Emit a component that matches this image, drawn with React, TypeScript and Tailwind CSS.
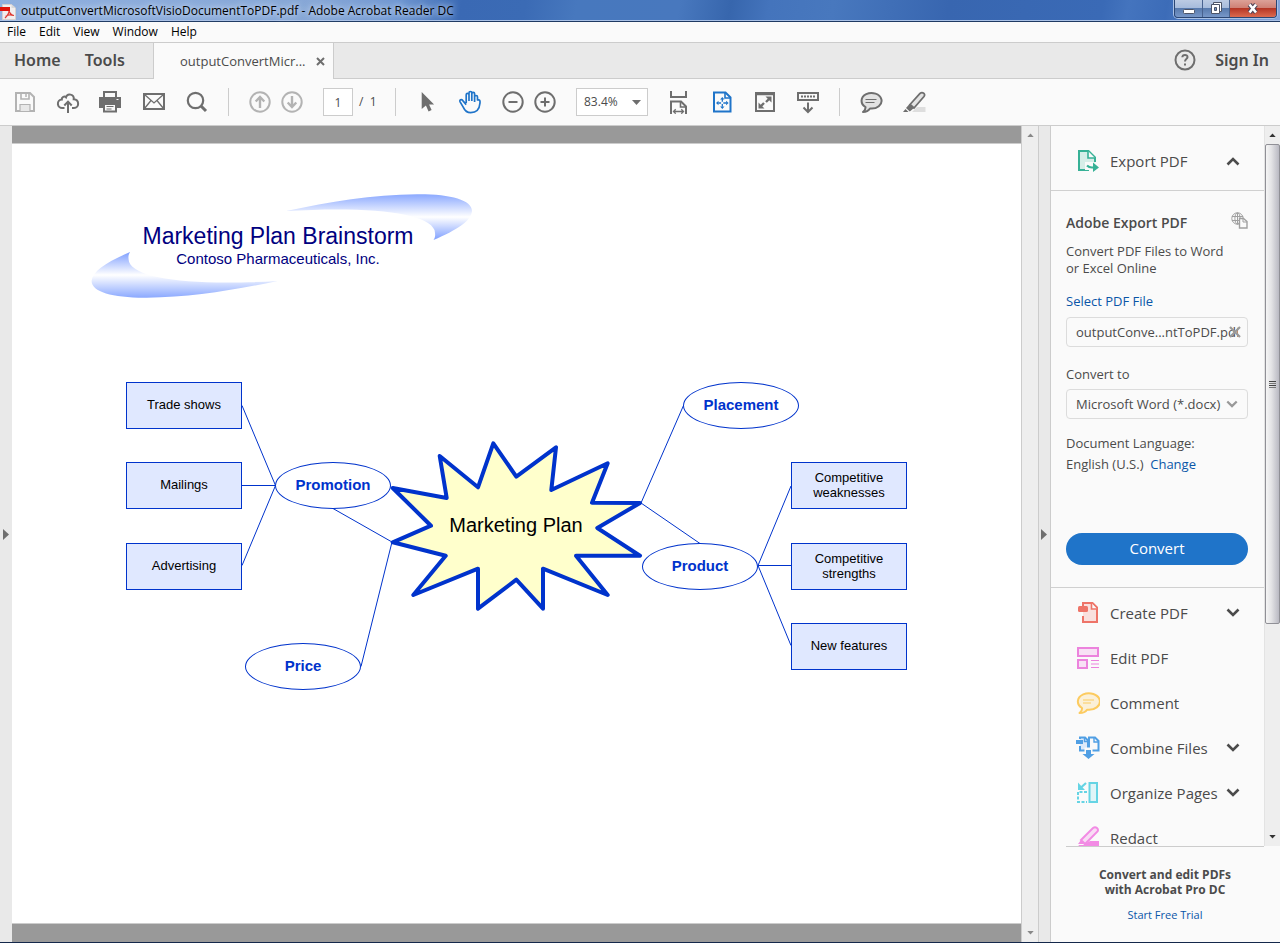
import React from "react";

type IconProps = { children: React.ReactNode; size?: number };

function Icon({ children, size = 24 }: IconProps) {
  return (
    <svg width={size} height={size} viewBox="0 0 24 24" fill="none" stroke="currentColor" strokeWidth="2" className="shrink-0" aria-hidden="true">
      {children}
    </svg>
  );
}

function ToolButton({ label, tone = "text-[#6e6e6e]", children }: { label: string; tone?: string; children: React.ReactNode }) {
  return (
    <button type="button" aria-label={label} className={`shrink-0 ${tone}`}>
      <Icon>{children}</Icon>
    </button>
  );
}

function Separator() {
  return <div className="h-7 w-px shrink-0 bg-[#cccccc]" />;
}

function Chevron({ up = false, small = false }: { up?: boolean; small?: boolean }) {
  return (
    <svg width={small ? 12 : 14} height={small ? 8 : 9} viewBox="0 0 14 9" fill="none" stroke="currentColor" strokeWidth="2.6" aria-hidden="true">
      <path d={up ? "M1.5 7.5L7 2L12.5 7.5" : "M1.5 1.5L7 7L12.5 1.5"} />
    </svg>
  );
}

function TitleBar() {
  return (
    <header className="relative flex h-[22px] shrink-0 items-center border-b border-[#1f3a63] bg-[linear-gradient(100deg,#8fb0df_0%,#86a6d6_25%,#6f97d2_31%,#3a69b4_36%,#3b6bb5_41%,#4778be_45%,#4878be_53%,#3766ad_57%,#4474bc_60%,#4878be_65%,#3866b0_74%,#3a6ab6_86%,#4474be_88%,#3c6cb8_91%,#6f95cf_97%,#84a5da_100%)] shadow-[inset_0_-1px_0_#a9c1e6]">
      <svg width="17" height="18" viewBox="0 0 17 18" aria-hidden="true" className="shrink-0">
        <path d="M2.500 2.500h9l4 3.500v11.500h-13z" fill="#f1eeee" stroke="#d5d0d0" />
        <path d="M11.500 2.500v3.500h4z" fill="#d9d9d9" />
        <path d="M0 5h10v4H0z" fill="#e0130c" />
        <path d="M9 9c0 3-2 5-4 7M9 9c1 3 2 4 5 4.500M5.500 14.500c2-1.500 5-2 8-1" stroke="#df3a32" strokeWidth="1.200" fill="none" />
      </svg>
      <h1 className="ml-1 text-[12px] text-black [text-shadow:0_0_8px_#dbe7f8,0_0_5px_#c4d6f0]">
        outputConvertMicrosoftVisioDocumentToPDF.pdf - Adobe Acrobat Reader DC
      </h1>
      <div className="mr-[3px] ml-auto flex h-[18px] self-start overflow-hidden rounded-b-[4px] border border-t-0 border-[#2b4673] shadow-[0_0_0_1px_#a9c1e6]">
        <button type="button" aria-label="Minimize" className="flex w-[28px] items-center justify-center border-r border-[#48628f] bg-[linear-gradient(#bccbe3_0%,#a7bcdc_45%,#5678ab_46%,#7797c8_100%)]">
          <svg width="12" height="14" viewBox="0 0 12 14"><rect x="0.500" y="7.500" width="11" height="4" rx="1" fill="#fff" stroke="#4c5468" /></svg>
        </button>
        <button type="button" aria-label="Restore" className="flex w-[27px] items-center justify-center border-r border-[#48628f] bg-[linear-gradient(#bccbe3_0%,#a7bcdc_45%,#5678ab_46%,#7797c8_100%)]">
          <svg width="13" height="14" viewBox="0 0 13 14" fill="#fff" stroke="#4c5468"><path d="M3.500 .5h8v9h-8z" /><path d="M1.500 2.500h8v9h-8z" /><path d="M4.500 5.500h2v3h-2z" fill="#7797c8" /></svg>
        </button>
        <button type="button" aria-label="Close" className="flex w-[46px] items-center justify-center bg-[linear-gradient(#dca198_0%,#cf8175_45%,#b23222_46%,#dc6a4f_100%)]">
          <svg width="14" height="14" viewBox="0 0 14 14" fill="none"><path d="M3.500 2.500l6.500 8M10 2.500l-6.500 8" stroke="#4c4458" strokeWidth="4.600" /><path d="M3.500 2.500l6.500 8M10 2.500l-6.500 8" stroke="#fff" strokeWidth="2.600" /></svg>
        </button>
      </div>
    </header>
  );
}

function TabBar() {
  return (
    <div className="flex h-[37px] shrink-0 border-t border-[#cccccc] bg-[#e9e9e9] text-[#4b4b4b]">
      <nav className="flex w-[154px] shrink-0 items-center gap-6 border-r border-b border-[#cccccc] pb-px pl-[14px] font-['Noto_Sans',sans-serif] text-[16px] font-semibold">
        <button type="button">Home</button>
        <button type="button">Tools</button>
      </nav>
      <div className="flex w-[180px] shrink-0 items-center justify-between border-r border-[#cccccc] bg-[#fafafa] pt-px pr-2 pl-[26px]">
        <button type="button" className="text-[13px]">outputConvertMicr...</button>
        <button type="button" aria-label="Close tab">
          <svg width="9" height="9" viewBox="0 0 9 9" stroke="#6e6e6e" strokeWidth="2"><path d="M1 1l7 7M8 1l-7 7" /></svg>
        </button>
      </div>
      <div className="flex flex-1 items-center justify-end gap-[18px] border-b border-[#cccccc] pr-[11px] pb-px">
        <button type="button" aria-label="Help" className="text-[#6e6e6e]">
          <Icon>
            <circle cx="12" cy="12" r="9.500" />
            <path d="M9.300 9.300c.2-3.300 5.400-3.100 5.200-.2c-.1 1.700-2.400 2-2.500 4.400" />
            <path d="M11 15.500h2v2h-2z" fill="currentColor" stroke="none" />
          </Icon>
        </button>
        <button type="button" className="font-['Noto_Sans',sans-serif] text-[16px] font-semibold">Sign In</button>
      </div>
    </div>
  );
}

function Toolbar() {
  return (
    <div className="flex h-[47px] shrink-0 items-center gap-[19px] border-b border-[#cccccc] px-[13px]">
      <ToolButton label="Save" tone="text-[#b3b3b3]">
        <path d="M3 3h14l4 4v14H3z" />
        <path d="M8 3v6h8V3" strokeWidth="1.600" /><path d="M13 4v3" strokeWidth="1.500" />
        <path d="M7 21v-6.500h10V21" strokeWidth="1.200" fill="#e8e8e8" />
      </ToolButton>
      <ToolButton label="Upload to cloud">
        <path d="M8.500 18H6.500a4.200 4.200 0 01-.7-8.500c-.3-2.400 2.700-3.800 4.200-2.200c1.300-4.500 8.500-3.300 7.700 2c6 .3 5.700 8.700.3 8.700h-2" />
        <path d="M12 23V12M8.300 15.500L12 11.600l3.700 3.900" />
      </ToolButton>
      <ToolButton label="Print">
        <path d="M5 7V2h12v5" />
        <path d="M0 7h22v11h-4v-5H4v5H0z" fill="currentColor" stroke="none" />
        <path d="M5 14h12v7.500H5z" fill="#fafafa" /><path d="M7.500 16.500h7M7.500 19h5" strokeWidth="1" />
        <path d="M17.500 9.500h2" stroke="#fafafa" strokeWidth="1" />
      </ToolButton>
      <ToolButton label="Email">
        <path d="M2 4h20v15H2z" /><path d="M2.500 4.500L12 13l9.500-8.500M2.500 18.500l6.500-8M21.500 18.500l-6.500-8" strokeWidth="1.300" />
      </ToolButton>
      <ToolButton label="Find">
        <circle cx="10.500" cy="10.500" r="7.700" strokeWidth="2.200" /><path d="M16 16l5 5" strokeWidth="3" />
      </ToolButton>
      <Separator />
      <div className="flex gap-2">
        <ToolButton label="Previous page" tone="text-[#b3b3b3]">
          <circle cx="12" cy="12" r="9.700" /><path d="M12 18V7.500M7.700 11.500L12 7l4.300 4.500" strokeWidth="2.400" />
        </ToolButton>
        <ToolButton label="Next page" tone="text-[#b3b3b3]">
          <circle cx="12" cy="12" r="9.700" /><path d="M12 6v10.500M7.700 12.500L12 17l4.300-4.500" strokeWidth="2.400" />
        </ToolButton>
      </div>
      <label className="flex w-[53px] shrink-0 items-center gap-[6px] text-[12px] text-[#4b4b4b]">
        <input aria-label="Page number" defaultValue="1" className="h-7 w-[30px] border border-[#cccccc] bg-white text-center" />
        <span className="whitespace-pre">/  1</span>
      </label>
      <Separator />
      <ToolButton label="Select tool">
        <path d="M6.700 2v17l4.200-3.500l2.700 6l3-1.400l-2.500-5.600h5z" fill="currentColor" stroke="none" />
      </ToolButton>
      <ToolButton label="Hand tool" tone="text-[#1f74c9]">
        <path d="M8.200 13V4.800c0-2 2.800-2 2.800 0V11M11 10V3c0-2 2.800-2 2.800 0v8M13.800 11V3.800c0-2 2.800-2 2.800 0V12M16.600 11.500V7c0-2 2.900-2 2.900 0v3c2.500-.6 2.700.8 2.500 3c-.5 6-3.500 9.700-9.300 9.700c-4.200 0-6-2.200-7.200-5l-3.400-5.900c-1-2 1.300-3 2.700-1.200l3.400 4" strokeWidth="1.700" strokeLinejoin="round" />
      </ToolButton>
      <div className="flex gap-2">
        <ToolButton label="Zoom out">
          <circle cx="12" cy="12" r="9.700" /><path d="M7.500 12h9" />
        </ToolButton>
        <ToolButton label="Zoom in">
          <circle cx="12" cy="12" r="9.700" /><path d="M7.500 12h9M12 7.500v9" />
        </ToolButton>
      </div>
      <div className="relative shrink-0">
        <select aria-label="Zoom level" className="block h-7 w-[72px] appearance-none border border-[#cccccc] bg-white pl-[7px] text-[12px] text-[#4b4b4b]">
          <option>83.4%</option>
        </select>
        <svg width="9" height="5" viewBox="0 0 9 5" className="pointer-events-none absolute top-3 right-[7px]"><path d="M0 0h9L4.500 5z" fill="#6e6e6e" /></svg>
      </div>
      <ToolButton label="Fit width">
        <path d="M4 1v6h15V1" /><path d="M4 24V11.500h10l5 5V24" /><path d="M13.500 11.500V17H19" strokeWidth="1.600" />
        <path d="M6.500 21.500h10M8.700 19.300l-2.200 2.200l2.200 2.200M14.300 19.300l2.200 2.200l-2.200 2.200" strokeWidth="1.300" />
      </ToolButton>
      <ToolButton label="Fit page" tone="text-[#1f74c9]">
        <path d="M4 2.500h11.500L20.500 7.500v14H4z" /><path d="M15 2.500V8h5.500" strokeWidth="1.600" />
        <path d="M12.300 7l-2.200 2.500h4.400zM12.300 19l-2.200-2.500h4.400zM6 13l2.500-2.200v4.400zM18.600 13l-2.500-2.200v4.400z" fill="currentColor" stroke="none" />
        <path d="M12.300 9v8M8.300 13h8" strokeWidth="1.300" strokeDasharray="2.800 2.200" />
      </ToolButton>
      <ToolButton label="Full screen">
        <path d="M3 3h18v18H3z" /><path d="M3 4.500h18" strokeWidth="1.500" />
        <path d="M12.500 6.500h6v6zM5.500 12.500v6h6z" fill="currentColor" stroke="none" /><path d="M16.500 8.500l-3.500 3.500M7.500 16.500l3.500-3.500" strokeWidth="2.400" />
      </ToolButton>
      <ToolButton label="Show reading toolbar">
        <path d="M2 3h20v7H2z" /><path d="M5 6.500h14" strokeDasharray="2 1" />
        <path d="M12 12.500v9.500M7.500 17.500L12 22l4.500-4.500" />
      </ToolButton>
      <Separator />
      <ToolButton label="Add comment">
        <path d="M6.500 17A10 7.800 0 1 1 11 18.500C9.500 20.800 7 22 4 22C6 20.500 6.700 19 6.500 17z" fill="#e3e3e3" strokeLinejoin="round" />
        <path d="M6.500 9.500h11M6.500 12.500h9" strokeWidth="1.200" />
      </ToolButton>
      <ToolButton label="Highlight text">
        <path d="M10 22l5-5h8.500v5z" fill="#dedede" stroke="none" />
        <path d="M8 14.500L18 3.500c2.500-2 6 .5 4 3L12 18z" fill="#e3e3e3" strokeWidth="1.800" />
        <path d="M7.500 14L4 18l3.800 3.500L12 18zM1 22l2.500-3l3 3z" fill="currentColor" stroke="none" />
      </ToolButton>
    </div>
  );
}

const boxNodes = [
  { label: "Trade shows", place: "left-[114px] top-[238px]" },
  { label: "Mailings", place: "left-[114px] top-[318px]" },
  { label: "Advertising", place: "left-[114px] top-[399px]" },
  { label: "Competitive weaknesses", place: "left-[779px] top-[318px]" },
  { label: "Competitive strengths", place: "left-[779px] top-[399px]" },
  { label: "New features", place: "left-[779px] top-[479px]" },
];

const topicNodes = [
  { label: "Promotion", place: "left-[263px] top-[318px]" },
  { label: "Price", place: "left-[233px] top-[499px]" },
  { label: "Placement", place: "left-[671px] top-[238px]" },
  { label: "Product", place: "left-[630px] top-[399px]" },
];

function Diagram() {
  return (
    <div className="relative h-full min-w-0 flex-1 overflow-hidden border-y border-[#cccccc] bg-white font-['Liberation_Sans',Arial,sans-serif]">
      <svg width="1009" height="780" viewBox="12 144 1009 780" className="absolute top-0 left-0" aria-hidden="true">
        <defs>
          <linearGradient id="swoosh" x1="0" y1="194" x2="0" y2="240" gradientUnits="userSpaceOnUse">
            <stop offset="0" stopColor="#8aa8ff" /><stop offset="0.500" stopColor="#ffffff" /><stop offset="1" stopColor="#7f9fff" />
          </linearGradient>
        </defs>
        <path id="arc" d="M286 211C330 202 372 194.500 417 194.300C450 194 472 200 472 211C471 221 457 230 433.500 240C435.500 237 435.500 235 434.500 230C428 213 372 206 286 211z" fill="url(#swoosh)" />
        <use href="#arc" transform="rotate(180 281.800 246)" />
        <g fill="none" stroke="#0033cc">
          <path d="M242 405.500L275.500 485.500L242 565.500M242 485.500h33.500M333 508.500L392 542L361 666.500M641 503L683.500 405.500M641 503L700 543.500M791 486L758 565.500L791 645.500M758 565.500h33" />
          <path d="M493.300 443.300L516.300 476.700L556 447.300L551.300 490L607.700 463.300L592 502.700L640 503L597.300 528L640 555.700L576 555.700L607.700 595L543 568.700L543 608.700L516.300 579.700L478 608.700L478 568.700L413.300 595L445.700 555.700L392.700 542.300L431 525.700L392.700 488L446.700 498L439.700 456L478 487.300z" fill="#ffffcc" strokeWidth="4" strokeLinejoin="round" />
        </g>
      </svg>
      <h2 className="absolute top-[78px] left-[126px] w-[280px] text-center text-[23px] leading-7 whitespace-nowrap text-[#000080]">Marketing Plan Brainstorm</h2>
      <p className="absolute top-[105px] left-[126px] w-[280px] text-center text-[15px] leading-5 text-[#000080]">Contoso Pharmaceuticals, Inc.</p>
      <p className="absolute top-[367px] left-[424px] w-[160px] text-center text-[20px] leading-7 text-black">Marketing Plan</p>
      {boxNodes.map((n) => (
        <div key={n.label} className={`absolute flex h-[47px] w-[116px] items-center justify-center border border-[#0033cc] bg-[#e0e8ff] px-3 pb-[2px] text-center text-[13px] leading-[15px] text-black ${n.place}`}>
          <span className="max-w-[80px]">{n.label}</span>
        </div>
      ))}
      {topicNodes.map((n) => (
        <div key={n.label} className={`absolute flex h-[47px] w-[116px] items-center justify-center rounded-[50%] border border-[#0033cc] bg-white text-[15px] font-bold text-[#0033cc] ${n.place}`}>{n.label}</div>
      ))}
    </div>
  );
}

function ScrollArrow({ down = false }: { down?: boolean }) {
  return (
    <svg width="7" height="4" viewBox="0 0 8 5" aria-hidden="true"><path d={down ? "M0 0h8L4 4.500z" : "M0 5h8L4 .5z"} fill="currentColor" /></svg>
  );
}

const tools = [
  {
    label: "Create PDF", color: "text-[#ee7468]", menu: true,
    art: (<><path d="M7 7V2h9.500L21 6.500V21H7v-6" fill="#f9e0de" /><path d="M15.500 2v6H21" strokeWidth="1.600" fill="#fafafa" /><rect x="2" y="5" width="10" height="6" rx="1.500" fill="currentColor" stroke="none" /></>),
  },
  {
    label: "Edit PDF", color: "text-[#ec83dd]", menu: false,
    art: (<><path d="M2 2h20v8H2z" fill="#f8e1f5" /><path d="M2 14h9v8H2z" fill="#f8e1f5" /><path d="M15 14.500h8M15 18h8M15 21.500h8" strokeWidth="1.200" /></>),
  },
  {
    label: "Comment", color: "text-[#fccb60]", menu: false,
    art: (<><path d="M6 17A11 8.300 0 1 1 11 18.700C9.500 21 7 22 3.500 22C5.500 20.500 6.300 19 6 17z" fill="#fbf0d8" strokeLinejoin="round" /><path d="M7 9h11M7 12h8" strokeWidth="1.200" /></>),
  },
  {
    label: "Combine Files", color: "text-[#509fe4]", menu: true,
    art: (<><path d="M4 3V1.500h5L12 4.500V14.500H4V10" fill="#dceafa" /><path d="M13 14.500V1.500h6L22.500 5v9.500H13z" fill="#fafafa" /><path d="M8.500 1.500v4H12M18 1.500V6h4.500" strokeWidth="1.400" /><path d="M0 4h7v4H0z" fill="currentColor" stroke="none" /><path d="M8.500 11.500h8v5h-8z" fill="#fafafa" stroke="none" /><path d="M10 14h5v4h3.500L12.500 23L6.500 18H10z" fill="currentColor" stroke="none" /></>),
  },
  {
    label: "Organize Pages", color: "text-[#65d4e4]", menu: true,
    art: (<><path d="M13.500 2h7.500v19h-7.500z" fill="#dff5f8" /><path d="M11 11H2v10h9" strokeDasharray="3 1.500" /><path d="M10 2L5 6.500" strokeWidth="2.200" /><path d="M2 1.500V9h7z" fill="currentColor" stroke="none" /></>),
  },
  {
    label: "Redact", color: "text-[#f28be4]", menu: false,
    art: (<><path d="M5 14L17 2c3-2 6 1 4.500 3.500L9 18z" fill="#f9dcf5" /><path d="M5 14l-3 4h5l2-1zM1 22l2-3h4l7-4h9v7z" fill="currentColor" stroke="none" /></>),
  },
];

function ExportPanel() {
  return (
    <section className="flex h-[397px] shrink-0 flex-col border-b border-[#d0d0d0] pt-[21px] pr-4 pl-[15px] text-[13px] text-[#4b4b4b]">
      <div className="flex h-5 items-center justify-between">
        <h2 className="text-[14px] font-semibold">Adobe Export PDF</h2>
        <svg width="17" height="17" viewBox="0 0 17 17" fill="none" stroke="#a0a0a0" aria-hidden="true" className="mb-1">
          <circle cx="6.500" cy="6.500" r="5.700" /><ellipse cx="6.500" cy="6.500" rx="2.600" ry="5.700" /><path d="M1 4.500h11M1 8.500h11M6.500 1v11" />
          <path d="M8.500 6.500h4l3.500 3v6.500H8.500z" fill="#fafafa" strokeWidth="1.400" /><path d="M12 6.500V10h4" />
        </svg>
      </div>
      <p className="mt-[11px] w-[165px] leading-[17px]">Convert PDF Files to Word or Excel Online</p>
      <label htmlFor="file" className="mt-[14px] leading-5 text-[#0a56a8]">Select PDF File</label>
      <div className="relative mt-[6px] h-[30px] shrink-0">
        <input id="file" readOnly value="outputConve...ntToPDF.pdf" className="h-full w-full rounded-[4px] border border-[#dcdcdc] bg-transparent px-[9px]" />
        <button type="button" aria-label="Remove file" className="absolute top-[9px] right-[7px]">
          <svg width="12" height="12" viewBox="0 0 12 12" stroke="#999999" strokeWidth="2.200"><path d="M1 1l10 10M11 1L1 11" /></svg>
        </button>
      </div>
      <label htmlFor="format" className="mt-[17px] leading-5">Convert to</label>
      <div className="relative mt-[5px] h-[30px] shrink-0 text-[#4b4b4b]">
        <select id="format" className="h-full w-full appearance-none rounded-[4px] border border-[#dcdcdc] bg-transparent px-[9px] pt-px">
          <option>Microsoft Word (*.docx)</option>
        </select>
        <span className="pointer-events-none absolute top-[11px] right-[10px] text-[#999999]"><Chevron small /></span>
      </div>
      <p className="mt-[14px] leading-[21px]">Document Language:<br />English (U.S.)&nbsp; <a href="#language" className="text-[#0a56a8]">Change</a></p>
      <button type="button" className="mt-auto mb-[22px] h-8 shrink-0 rounded-full bg-[#1f74c9] pb-0.5 text-[15px] text-white">Convert</button>
    </section>
  );
}

function ToolsPane() {
  return (
    <aside className="flex w-[229px] shrink-0 flex-col">
      <div className="flex min-h-0 flex-1">
        <div className="min-w-0 flex-1 overflow-hidden">
          <button type="button" className="flex h-[65px] w-full items-center border-b border-[#d0d0d0] pt-[6px] pr-6 pl-[25px] text-[15px] text-[#4b4b4b]">
            <span className="mr-[10px] text-[#37b196]">
              <Icon>
                <path d="M13 21H3V2h9.500L19 8.500V13" fill="#d6eee8" /><path d="M12 2v7h7" strokeWidth="1.600" fill="#fafafa" />
                <path d="M9 13h9v8H9z" fill="#fafafa" stroke="none" /><path d="M11 16.500c1.500 1.500 3 2 5 2h2" strokeWidth="2.200" /><path d="M17 13.500l6 5l-6 4.500z" fill="currentColor" stroke="none" />
              </Icon>
            </span>
            <span>Export PDF</span>
            <span className="ml-auto"><Chevron up /></span>
          </button>
          <ExportPanel />
          <ul className="pt-0.5 text-[15px] text-[#4b4b4b]">
            {tools.map((t) => (
              <li key={t.label}>
                <button type="button" className="flex h-[45px] w-full items-center pr-6 pl-[25px] leading-4">
                  <span className={`mr-[10px] ${t.color}`}><Icon>{t.art}</Icon></span>
                  <span className="whitespace-nowrap">{t.label}</span>
                  {t.menu && <span className="ml-auto"><Chevron /></span>}
                </button>
              </li>
            ))}
          </ul>
        </div>
        <div className="flex w-4 shrink-0 flex-col items-center border-l border-[#e3e3e3] bg-[#eeeeee] text-[#333333]">
          <span className="flex h-[18px] items-center"><ScrollArrow /></span>
          <div className="flex h-[480px] w-full flex-col items-center justify-center gap-px rounded-[2px] border border-[#909096] bg-[linear-gradient(90deg,#f5f5f5_0%,#e4e4e6_40%,#b9b9c2_100%)]">
            <i className="h-px w-[7px] bg-[#444444]" /><i className="h-px w-[7px] bg-[#777777]" /><i className="h-px w-[7px] bg-[#444444]" /><i className="h-px w-[7px] bg-[#777777]" />
          </div>
          <span className="mt-auto flex h-[18px] items-center"><ScrollArrow down /></span>
        </div>
      </div>
      <footer className="mr-4 ml-[15px] flex h-24 shrink-0 flex-col items-center border-t border-[#cccccc] text-center text-[#4b4b4b]">
        <p className="mt-5 text-[12px] leading-[15px] font-bold">Convert and edit PDFs<br />with Acrobat Pro DC</p>
        <a href="#trial" className="mt-2 text-[11px] leading-5 text-[#0a56a8]">Start Free Trial</a>
      </footer>
    </aside>
  );
}

export default function App() {
  return (
    <div className="flex h-screen flex-col overflow-hidden border-b border-[#14284b] bg-[#fafafa] font-['Open_Sans','Noto_Sans',sans-serif]">
      <TitleBar />
      <nav className="flex h-5 shrink-0 items-center gap-[13px] pl-[7px] text-[12px] text-black">
        {["File", "Edit", "View", "Window", "Help"].map((m) => (<button key={m} type="button">{m}</button>))}
      </nav>
      <TabBar />
      <Toolbar />
      <main className="flex min-h-0 flex-1">
        <button type="button" aria-label="Show navigation pane" className="flex w-3 shrink-0 items-center bg-[#e9e9e9] pl-[3px]">
          <svg width="6" height="11" viewBox="0 0 6 11"><path d="M0 0v11l6-5.500z" fill="#6e6e6e" /></svg>
        </button>
        <div className="flex min-w-0 flex-1 bg-[#999999] pt-[17px] pb-[18px]"><Diagram /></div>
        <div className="flex w-[17px] shrink-0 flex-col items-center justify-between border-l border-[#cccccc] bg-[#eeeeee] text-[#888888]">
          <span className="flex h-[18px] items-center"><ScrollArrow /></span>
          <span className="flex h-[18px] items-center"><ScrollArrow down /></span>
        </div>
        <button type="button" aria-label="Hide tools pane" className="flex w-[13px] shrink-0 items-center border-x border-[#cccccc] bg-[#e9e9e9] pl-0.5">
          <svg width="6" height="11" viewBox="0 0 6 11"><path d="M0 0v11l6-5.500z" fill="#6e6e6e" /></svg>
        </button>
        <ToolsPane />
      </main>
    </div>
  );
}
